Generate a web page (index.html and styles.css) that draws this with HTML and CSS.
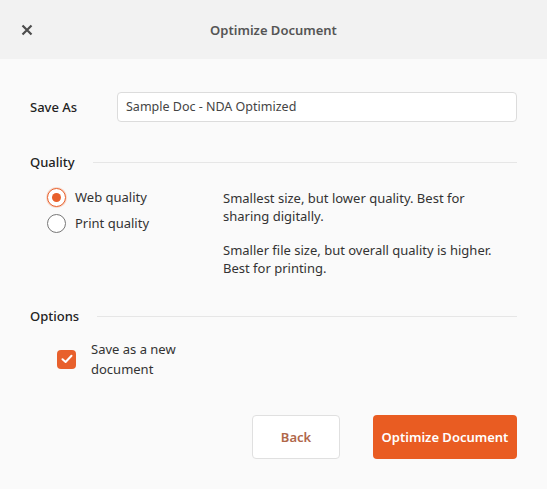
FILE: index.html
```html
<!DOCTYPE html>
<html>
<head>
<meta charset="utf-8">
<link rel="stylesheet" href="styles.css">
</head>
<body>
<div class="dialog">
  <div class="header">
    <button class="close" aria-label="Close">
      <svg width="12" height="12" viewBox="0 0 12 12"><path d="M1.5 1.5 L10.5 10.5 M10.5 1.5 L1.5 10.5" stroke="#4d4d4d" stroke-width="2.2" stroke-linecap="butt"/></svg>
    </button>
    <div class="title">Optimize Document</div>
    <div></div>
  </div>
  <div class="content">
    <div class="save-row">
      <label class="label">Save As</label>
      <div class="input">Sample Doc - NDA Optimized</div>
    </div>

    <div class="section-head"><span class="label">Quality</span><span class="rule"></span></div>
    <div class="quality">
      <div class="radios">
        <div class="radio-row"><span class="radio checked"></span><span>Web quality</span></div>
        <div class="radio-row"><span class="radio"></span><span>Print quality</span></div>
      </div>
      <div class="descs">
        <p>Smallest size, but lower quality. Best for sharing digitally.</p>
        <p>Smaller file size, but overall quality is higher. Best for printing.</p>
      </div>
    </div>

    <div class="section-head opts"><span class="label">Options</span><span class="rule"></span></div>
    <div class="check-row">
      <span class="checkbox"><svg width="12" height="10" viewBox="0 0 12 10"><path d="M1.5 5.2 L4.6 8 L10.5 1.8" fill="none" stroke="#fff" stroke-width="2" stroke-linecap="round" stroke-linejoin="round"/></svg></span>
      <span class="check-label">Save as a new document</span>
    </div>

    <div class="actions">
      <button class="btn back">Back</button>
      <button class="btn primary">Optimize Document</button>
    </div>
  </div>
</div>
</body>
</html>
```
FILE: styles.css
```css
html, body {
  margin: 0;
  padding: 0;
}
body {
  width: 547px;
  height: 489px;
  background: #fafafa;
  font-family: "Noto Sans", "Liberation Sans", sans-serif;
  font-size: 13px;
  color: #333;
}
.dialog {
  width: 547px;
  height: 489px;
  background: #fafafa;
}
.header {
  height: 59px;
  background: #f2f2f2;
  display: grid;
  grid-template-columns: 1fr auto 1fr;
  align-items: center;
}
.close {
  justify-self: start;
  margin-left: 20px;
  width: 14px;
  height: 14px;
  padding: 0;
  border: 0;
  background: none;
  display: flex;
  align-items: center;
  justify-content: center;
}
.title {
  font-size: 13px;
  font-weight: 600;
  color: #555;
}
.content {
  padding: 33px 30px 0 30px;
}
.label {
  font-weight: 500;
  color: #222;
}
.save-row {
  display: flex;
  align-items: center;
}
.save-row .label {
  width: 87px;
}
.input {
  flex: 1;
  height: 30px;
  box-sizing: border-box;
  border: 1px solid #dcdcdc;
  border-radius: 4px;
  background: #fff;
  padding: 0 8px;
  line-height: 28px;
  font-size: 12.5px;
  color: #444;
}
.section-head {
  display: flex;
  align-items: center;
  margin-top: 30px;
  height: 20px;
}
.section-head .rule {
  flex: 1;
  height: 1px;
  background: #e6e6e6;
  margin-left: 18px;
}
.quality {
  display: flex;
  margin-top: 16px;
}
.radios {
  width: 176px;
  padding-left: 17px;
}
.radio-row {
  display: flex;
  align-items: center;
  height: 26px;
  margin-top: -4px;
  gap: 9px;
}
.radio-row + .radio-row {
  margin-top: 0;
}
.radio {
  width: 19px;
  height: 19px;
  box-sizing: border-box;
  border-radius: 50%;
  border: 1px solid #777;
  background: #fff;
  position: relative;
}
.radio.checked {
  border: 1.5px solid #e8602c;
  box-shadow: 0 0 0 1px #f6d9cc;
}
.radio.checked::after {
  content: "";
  position: absolute;
  left: 50%;
  top: 50%;
  width: 9px;
  height: 9px;
  margin: -4.5px 0 0 -4.5px;
  border-radius: 50%;
  background: #e8602c;
}
.descs {
  flex: 1;
  padding-right: 8px;
}
.descs p {
  margin: 1px 0 16px 0;
  line-height: 18px;
}
.descs p + p {
  margin-top: 0;
}
.section-head.opts {
  margin-top: 13px;
}
.check-row {
  display: flex;
  align-items: center;
  margin-top: 13px;
  padding-left: 27px;
}
.checkbox {
  width: 19px;
  height: 19px;
  border-radius: 4px;
  background: #e8602c;
  display: flex;
  align-items: center;
  justify-content: center;
  margin-right: 15px;
}
.check-label {
  width: 120px;
  line-height: 20px;
}
.actions {
  display: flex;
  justify-content: flex-end;
  gap: 33px;
  margin-top: 36px;
}
.btn {
  height: 44px;
  border-radius: 4px;
  font-family: inherit;
  font-size: 13px;
  font-weight: 600;
  cursor: pointer;
}
.back {
  width: 88px;
  background: #fff;
  border: 1px solid #e0e0e0;
  color: #b0674a;
}
.primary {
  width: 144px;
  background: #e95c22;
  border: 0;
  color: #fff;
}
```
